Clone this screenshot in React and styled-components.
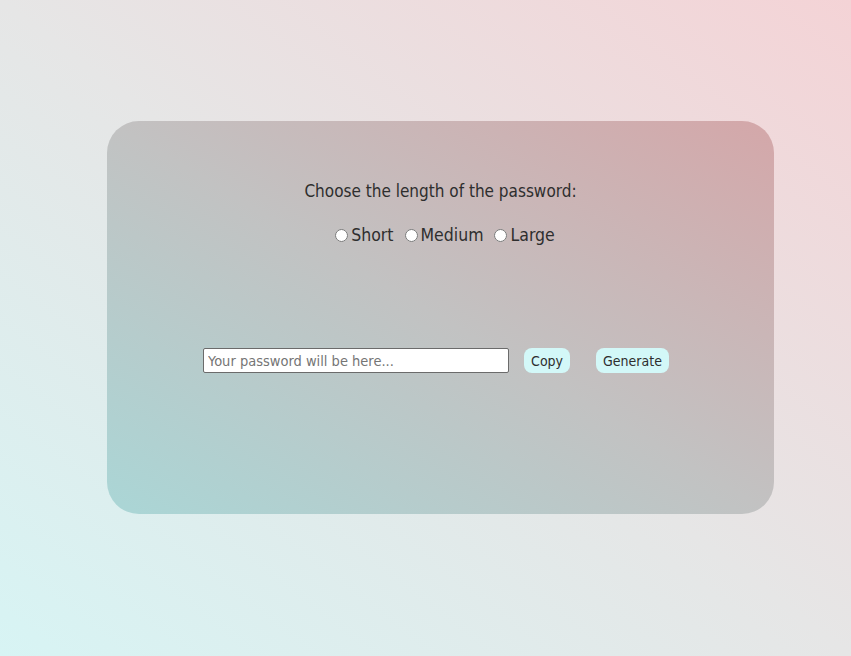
import { useState } from "react";
import styled, { createGlobalStyle } from "styled-components";

const GlobalStyle = createGlobalStyle`
  html, body {
    margin: 0;
    padding: 0;
  }
  body {
    min-height: 100vh;
    background: linear-gradient(to top right, #d7f4f4 0%, #e6e6e6 50%, #f4d3d6 100%);
    font-family: "DejaVu Sans Condensed", "Roboto", sans-serif;
  }
`;

const Page = styled.div`
  min-height: 100vh;
  padding: 121px 0 0 107px;
  box-sizing: border-box;
`;

const Card = styled.div`
  width: 667px;
  height: 393px;
  border-radius: 32px;
  background: linear-gradient(to top right, #aad6d6 0%, #c2c2c2 50%, #d4a7a9 100%);
  display: flex;
  flex-direction: column;
  align-items: center;
`;

const Title = styled.p`
  margin: 59px 0 0;
  font-size: 17px;
  line-height: 22px;
  color: #2e2e2e;
`;

const Options = styled.div`
  margin-top: 23px;
  padding-left: 4px;
  display: flex;
  align-items: center;
  gap: 6px;
  font-size: 17.5px;
  color: #2e2e2e;
`;

const Option = styled.label`
  display: flex;
  align-items: center;

  input {
    margin: 0 3px 0 5px;
    width: 13px;
    height: 13px;
  }
`;

const Controls = styled.div`
  margin-top: 103px;
  padding-right: 9px;
  display: flex;
  align-items: center;
`;

const Output = styled.input`
  width: 306px;
  height: 25px;
  box-sizing: border-box;
  border: 1px solid #6b6b6b;
  border-radius: 2px;
  padding: 0 4px;
  font-family: "DejaVu Sans Condensed", "Roboto", sans-serif;
  font-size: 14.5px;
  background: #fff;
  &::placeholder {
    color: #757575;
  }
`;

const Btn = styled.button`
  margin-left: ${(p) => p.$gap}px;
  height: 25px;
  padding: 0 7px;
  border: none;
  border-radius: 8px;
  background: #d3f8f8;
  color: #2e2e2e;
  font-family: "DejaVu Sans Condensed", "Roboto", sans-serif;
  font-size: 14px;
  cursor: pointer;
`;

const App = () => {
  const [length, setLength] = useState("");
  const [password, setPassword] = useState("");

  function generate() {
    const sizes = { Short: 8, Medium: 12, Large: 16 };
    const n = sizes[length] || 10;
    const chars =
      "ABCDEFGHIJKLMNOPQRSTUVWXYZabcdefghijklmnopqrstuvwxyz0123456789!@#$%";
    let out = "";
    for (let i = 0; i < n; i++) {
      out += chars[Math.floor(Math.random() * chars.length)];
    }
    setPassword(out);
  }

  return (
    <>
      <GlobalStyle />
      <Page>
        <Card>
          <Title>Choose the length of the password:</Title>
          <Options>
            {["Short", "Medium", "Large"].map((s) => (
              <Option key={s}>
                <input
                  type="radio"
                  name="length"
                  checked={length === s}
                  onChange={() => setLength(s)}
                />
                {s}
              </Option>
            ))}
          </Options>
          <Controls>
            <Output
              readOnly
              value={password}
              placeholder="Your password will be here..."
            />
            <Btn $gap={15} onClick={() => navigator.clipboard?.writeText(password)}>
              Copy
            </Btn>
            <Btn $gap={26} onClick={generate}>
              Generate
            </Btn>
          </Controls>
        </Card>
      </Page>
    </>
  );
};

export default App;
